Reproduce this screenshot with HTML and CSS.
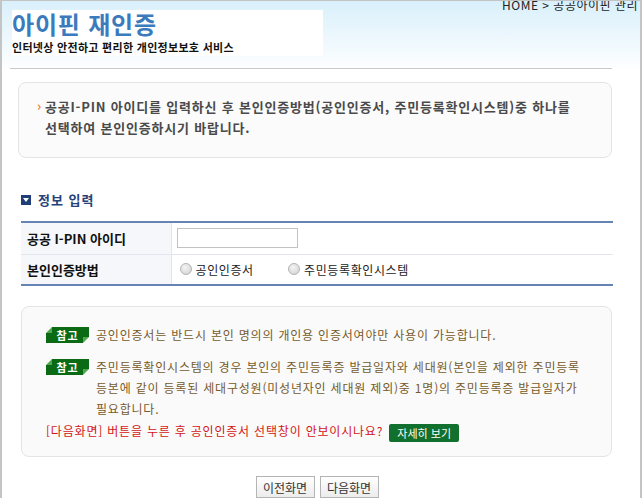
FILE: index.html
```html
<!DOCTYPE html>
<html lang="ko">

<head>
  <meta charset="UTF-8" />
  <title>아이핀 재인증</title>
  <link rel="stylesheet" href="styles.css">
</head>

<body>
  <div class="page">
    <div class="header">
      <div class="title-box">
        <h1 class="title">아이핀 재인증</h1>
        <p class="subtitle">인터넷상 안전하고 편리한 개인정보보호 서비스</p>
      </div>
      <div class="location">HOME &gt; 공공아이핀 관리</div>
    </div>
    <div class="header-line"></div>

    <div class="guide-box">
      <p class="guide-text">공공I-PIN 아이디를 입력하신 후 본인인증방법(공인인증서, 주민등록확인시스템)중 하나를<br>선택하여 본인인증하시기 바랍니다.</p>
    </div>

    <h2 class="section-title"><span class="section-icon"></span>정보 입력</h2>
    <table class="form-table">
      <tr>
        <th>공공 I-PIN 아이디</th>
        <td><input type="text" class="text-input" /></td>
      </tr>
      <tr>
        <th>본인인증방법</th>
        <td>
          <label class="radio"><span class="radio-dot"></span>공인인증서</label>
          <label class="radio"><span class="radio-dot"></span>주민등록확인시스템</label>
        </td>
      </tr>
    </table>

    <div class="notice-box">
      <div class="notice-row">
        <span class="badge">참고</span>
        <p>공인인증서는 반드시 본인 명의의 개인용 인증서여야만 사용이 가능합니다.</p>
      </div>
      <div class="notice-row">
        <span class="badge">참고</span>
        <p>주민등록확인시스템의 경우 본인의 주민등록증 발급일자와 세대원(본인을 제외한 주민등록<br>등본에 같이 등록된 세대구성원(미성년자인 세대원 제외)중 1명)의 주민등록증 발급일자가<br>필요합니다.</p>
      </div>
      <p class="notice-alert">[다음화면] 버튼을 누른 후 공인인증서 선택창이 안보이시나요? <a class="detail-btn">자세히 보기</a></p>
    </div>

    <div class="buttons">
      <button class="btn">이전화면</button>
      <button class="btn">다음화면</button>
    </div>
  </div>
</body>

</html>
```

FILE: styles.css
```css
* {
  box-sizing: border-box;
}

html,
body {
  margin: 0;
  padding: 0;
  background: #fff;
  font-family: "Noto Sans CJK KR", "Noto Sans", sans-serif;
  font-size: 12px;
  color: #333;
}

.page {
  width: 642px;
  height: 498px;
  overflow: hidden;
  border-top: 1px solid #c4c4c4;
  border-left: 2px solid #c4c4c4;
  border-right: 2px solid #c4c4c4;
}

/* header */
.header {
  display: flex;
  justify-content: space-between;
  height: 67px;
  background: linear-gradient(to bottom, #d9f0fb, #fdfeff);
}

.title-box {
  margin: 9px 0 0 10px;
  width: 311px;
  height: 46px;
  background: #fff;
}

.title {
  margin: 0;
  font-size: 24px;
  line-height: 27px;
  font-weight: 700;
  color: #3b7bbd;
  letter-spacing: 0.8px;
}

.subtitle {
  margin: 3px 0 0;
  font-size: 11px;
  line-height: 14px;
  font-weight: 700;
  color: #111;
  letter-spacing: 0.3px;
}

.location {
  margin: -3px 2px 0 0;
  font-size: 12px;
  line-height: 14px;
  color: #222;
  letter-spacing: 0.5px;
}

.header-line {
  margin: 0 28px 0 8px;
  border-top: 1px solid #c9c9c9;
}

/* guide */
.guide-box {
  margin: 13px 28px 0 16px;
  height: 76px;
  padding: 13px 18px;
  background: #fbfbfb;
  border: 1px solid #e4e4e4;
  border-radius: 8px;
}

.guide-text {
  margin: 0;
  padding-left: 8px;
  position: relative;
  font-size: 13px;
  line-height: 21px;
  font-weight: 700;
  color: #4a4a4a;
  white-space: nowrap;
  letter-spacing: 0.8px;
}

.guide-text::before {
  content: "›";
  position: absolute;
  left: 0;
  top: -1px;
  color: #e8862a;
  font-weight: 700;
}

/* section title */
.section-title {
  display: flex;
  align-items: center;
  gap: 7px;
  margin: 32px 0 0 19px;
  font-size: 13px;
  line-height: 20px;
  font-weight: 700;
  color: #25427a;
  letter-spacing: 1px;
}

.section-icon {
  position: relative;
  width: 10px;
  height: 10px;
  background: #1f3d77;
}

.section-icon::after {
  content: "";
  position: absolute;
  left: 2px;
  top: 3px;
  border-left: 3px solid transparent;
  border-right: 3px solid transparent;
  border-top: 4px solid #fff;
}

/* form table */
.form-table {
  margin: 11px 0 0 19px;
  width: 592px;
  border-collapse: collapse;
  border-top: 2px solid #6684b3;
  border-bottom: 2px solid #6684b3;
}

.form-table th,
.form-table td {
  height: 32px;
  padding: 0;
  border-bottom: 1px solid #e2e5ee;
}

.form-table tr:last-child th,
.form-table tr:last-child td {
  height: 31px;
  border-bottom: none;
}

.form-table th {
  width: 150px;
  padding-left: 6px;
  text-align: left;
  background: #f5f7fa;
  border-right: 1px solid #e2e5ee;
  font-size: 13px;
  font-weight: 700;
  color: #111;
}

.form-table td {
  padding-left: 5px;
}

.text-input {
  display: block;
  width: 121px;
  height: 20px;
  border: 1px solid #c3c3c3;
  background: #fff;
}

.radio {
  display: inline-flex;
  align-items: center;
  gap: 4px;
  margin: 0 28px 0 3px;
  font-size: 12px;
  color: #222;
  letter-spacing: 0.6px;
}

.radio-dot {
  width: 12px;
  height: 12px;
  border-radius: 50%;
  border: 1px solid #b5b5b5;
  background: radial-gradient(circle at 40% 35%, #f4f4f4, #cfcfcf);
}

/* notice */
.notice-box {
  margin: 20px 28px 0 19px;
  height: 151px;
  padding: 17px 24px 0;
  background: #fafafa;
  border: 1px solid #e4e4e4;
  border-radius: 8px;
}

.notice-row {
  display: flex;
  align-items: flex-start;
  gap: 7px;
  margin-bottom: 11px;
}

.notice-row p,
.notice-alert {
  margin: 0;
  font-size: 12px;
  line-height: 21px;
  color: #765a2c;
  white-space: nowrap;
  letter-spacing: 0.8px;
}

.notice-alert {
  margin-top: -10px;
  color: #d31515;
}

.badge {
  position: relative;
  flex: none;
  margin-top: 3px;
  width: 43px;
  height: 16px;
  background: #0b6b15;
  color: #fff;
  font-size: 11px;
  font-weight: 700;
  line-height: 16px;
  text-align: center;
  letter-spacing: 1px;
}

.badge::before,
.badge::after {
  content: "";
  position: absolute;
  width: 0;
  height: 0;
}

.badge::before {
  left: 0;
  top: 0;
  border-top: 6px solid #fafafa;
  border-right: 6px solid #4fa84f;
}

.badge::after {
  right: 0;
  bottom: 0;
  border-bottom: 6px solid #fafafa;
  border-left: 6px solid #4fa84f;
}

.detail-btn {
  display: inline-block;
  margin-left: 2px;
  padding: 0 8px;
  height: 18px;
  line-height: 18px;
  background: #11702e;
  border-radius: 2px;
  color: #fff;
  font-size: 11px;
  letter-spacing: 0;
  vertical-align: middle;
}

/* buttons */
.buttons {
  display: flex;
  justify-content: center;
  gap: 5px;
  margin-top: 19px;
  padding-right: 8px;
}

.btn {
  width: 59px;
  height: 22px;
  padding: 0;
  border: 1px solid #b4b4b4;
  background: linear-gradient(to bottom, #fff, #ececec);
  font-family: inherit;
  font-size: 12px;
  color: #333;
}
```
